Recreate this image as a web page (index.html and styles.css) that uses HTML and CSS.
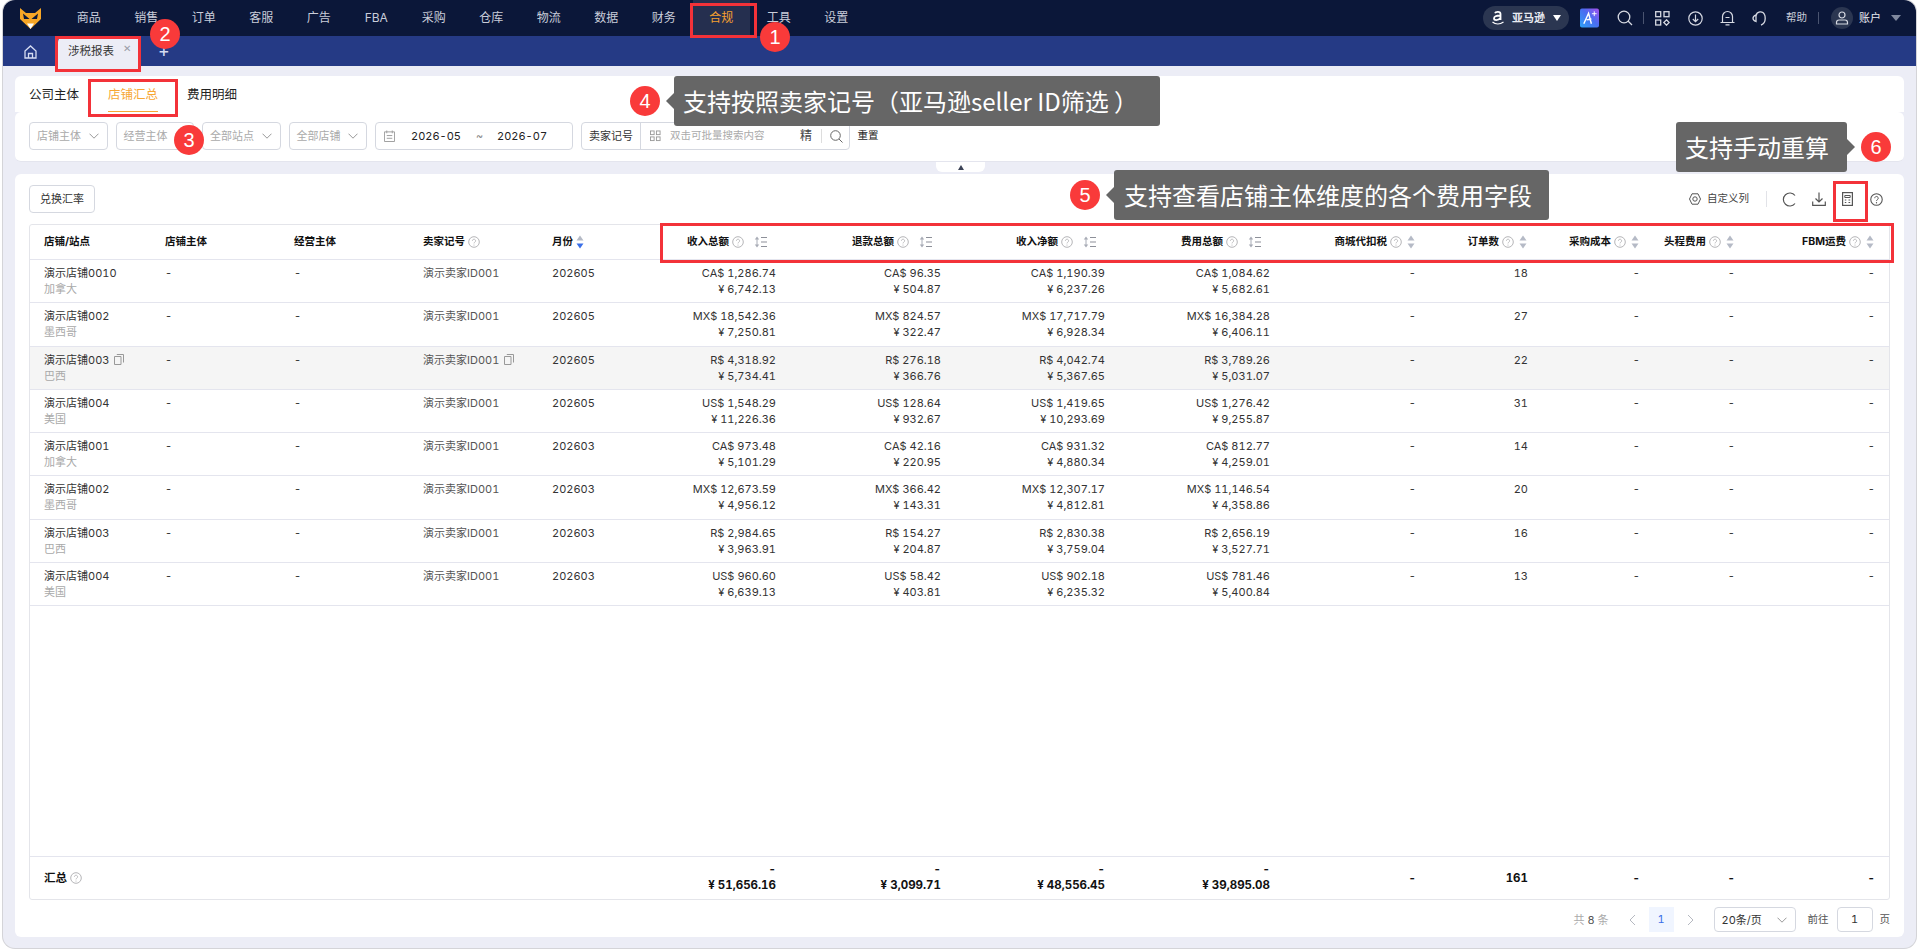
FILE: index.html
```html
<!DOCTYPE html>
<html lang="zh-CN">
<head>
<meta charset="utf-8">
<title>涉税报表</title>
<link rel="stylesheet" href="styles.css">
</head>
<body>
<svg class="defs" width="0" height="0" aria-hidden="true">
  <symbol id="i-help" viewBox="0 0 12 12"><circle cx="6" cy="6" r="5.3" fill="none" stroke="currentColor"/><path d="M4.4 4.8a1.6 1.6 0 1 1 2.5 1.3c-.6.4-.9.7-.9 1.3" fill="none" stroke="currentColor" stroke-width=".9"/><circle cx="6" cy="9" r=".6" fill="currentColor"/></symbol>
  <symbol id="i-chev" viewBox="0 0 10 6"><path d="M.5.7 5 5.2 9.5.7" fill="none" stroke="currentColor" stroke-width="1"/></symbol>
  <symbol id="i-sort" viewBox="0 0 13 12"><path d="M3 .5 5.2 3.4H.8ZM3 11.5.8 8.6h4.4Z" fill="#a8acb6"/><path d="M3 3v6" stroke="#a8acb6"/><path d="M7 1.5h6M7 6h6M7 10.5h6" stroke="#8d9099" stroke-width="1.2"/></symbol>
  <symbol id="i-caret" viewBox="0 0 8 14"><path d="M4 .5 7.5 5.5H.5Z" fill="#b5bac6"/><path d="M4 13.5.5 8.5h7Z" fill="#b5bac6"/></symbol>
  <symbol id="i-copy" viewBox="0 0 10 11"><path d="M.5 2.5h6.5v8H.5Z" fill="none" stroke="#999"/><path d="M2.8.5h6.7v8" fill="none" stroke="#999"/></symbol>
</svg>

<div class="window">
  <header class="nav">
    <svg class="logo" viewBox="0 0 21 21"><path d="M0 0 6 5h9l6-5v11l-10.500 10L0 11Z" fill="#f7a626"/><path d="M10.500 21 7 15.500h7Z" fill="#fff"/><path d="M3 5.500 9.500 11 4 11ZM18 5.500 11.500 11 17 11Z" fill="#0b1739"/></svg>
    <nav class="nav-menu">
      <a class="nav-item">商品</a><a class="nav-item">销售</a><a class="nav-item">订单</a><a class="nav-item">客服</a><a class="nav-item">广告</a><a class="nav-item">FBA</a><a class="nav-item">采购</a><a class="nav-item">仓库</a><a class="nav-item">物流</a><a class="nav-item">数据</a><a class="nav-item">财务</a><a class="nav-item active">合规</a><a class="nav-item">工具</a><a class="nav-item">设置</a>
    </nav>
    <div class="nav-right">
      <div class="pill">
        <svg class="amz" viewBox="0 0 12 16"><path d="M3 3.200C3.500 1.500 8.500 1 8.500 4v6M8.500 5.500C4 5.500 2 6.500 2 8.500s4 2.500 6.500-.5" fill="none" stroke="#fff" stroke-width="1.800"/><path d="M.5 12c3 2.500 7.500 2.500 11 0" fill="none" stroke="#fff" stroke-width="1.200"/></svg>
        <span class="pill-text">亚马逊</span><span class="tri tri-white"></span>
      </div>
      <svg class="ai" viewBox="0 0 20 20"><defs><linearGradient id="aig" x1="0" y1="1" x2="1" y2="0"><stop offset="0" stop-color="#2ea3f5"/><stop offset=".55" stop-color="#4b6cf0"/><stop offset="1" stop-color="#a650ee"/></linearGradient></defs><rect width="20" height="20" rx="2" fill="url(#aig)"/><path d="M4 16 9 5l3 11M7 12l5-1" fill="none" stroke="#fff" stroke-width="1.5"/><path d="M15 3v5M12.500 5.500h5" stroke="#fff"/></svg>
      <svg class="ni ni-search" viewBox="0 0 16 16"><circle cx="7" cy="7" r="5.800" fill="none" stroke="#d6d9e2" stroke-width="1.300"/><path d="m11 11 4 4" stroke="#d6d9e2" stroke-width="1.300"/></svg>
      <span class="nav-sep"></span>
      <svg class="ni ni-grid" viewBox="0 0 15 15"><g fill="none" stroke="#d6d9e2" stroke-width="1.300"><rect x=".7" y=".7" width="5" height="5"/><rect x="9" y=".7" width="5" height="5"/><rect x=".7" y="9" width="5" height="5"/><path d="m11.500 8.800 2.700 2.700-2.700 2.700-2.700-2.700Z"/></g></svg>
      <svg class="ni ni-dl" viewBox="0 0 15 15"><circle cx="7.500" cy="7.500" r="6.700" fill="none" stroke="#d6d9e2" stroke-width="1.200"/><path d="M7.500 3.500v7M4.800 8l2.700 2.700L10.200 8" fill="none" stroke="#d6d9e2" stroke-width="1.200"/></svg>
      <svg class="ni ni-bell" viewBox="0 0 15 16"><path d="M2.500 12V6.500a5 5 0 0 1 10 0V12M.5 12.500h14M5.500 14.800h4M5.500 7.500h4" fill="none" stroke="#d6d9e2" stroke-width="1.200"/></svg>
      <svg class="ni ni-head" viewBox="0 0 15 16"><path d="M4 5.500a4.500 4.500 0 0 1 8.500-1c.6 1.200.7 2.500.7 4 0 3-1.500 5.500-4.200 6.700" fill="none" stroke="#d6d9e2" stroke-width="1.300"/><path d="M4 5.200C2 5.800 1 7 1 8.300s1 2.500 3 3.200Z" fill="none" stroke="#d6d9e2" stroke-width="1.300"/></svg>
      <span class="nav-help">帮助</span>
      <span class="nav-sep sep-b"></span>
      <span class="avatar"><svg viewBox="0 0 14 14"><circle cx="7" cy="4" r="3" fill="none" stroke="#d6d9e2" stroke-width="1.200"/><path d="M1.500 13v-1.500c0-1.500 1-2.500 2.500-2.500h6c1.500 0 2.500 1 2.500 2.500V13Z" fill="none" stroke="#d6d9e2" stroke-width="1.200"/></svg></span>
      <span class="nav-user">账户</span>
      <span class="tri tri-gray"></span>
    </div>
  </header>

  <div class="tabbar">
    <svg class="home" viewBox="0 0 13 14"><path d="M1 6 6.500 1 12 6v7H1ZM4.500 13V8.500h4V13" fill="none" stroke="#d6dcf2" stroke-width="1.300"/></svg>
    <div class="page-tab"><span>涉税报表</span><span class="tab-x">✕</span></div>
    <span class="tab-add">+</span>
  </div>

  <main class="main">
    <section class="panel-top">
      <div class="sub-tabs">
        <a class="sub-tab">公司主体</a>
        <a class="sub-tab current">店铺汇总</a>
        <a class="sub-tab">费用明细</a>
      </div>
      <div class="filters">
        <div class="select"><span>店铺主体</span><svg class="chev"><use href="#i-chev"/></svg></div>
        <div class="select"><span>经营主体</span><svg class="chev"><use href="#i-chev"/></svg></div>
        <div class="select"><span>全部站点</span><svg class="chev"><use href="#i-chev"/></svg></div>
        <div class="select"><span>全部店铺</span><svg class="chev"><use href="#i-chev"/></svg></div>
        <div class="date">
          <svg class="cal" viewBox="0 0 12 13"><path d="M.5 2h11v10.500H.5ZM3 .5v3M9 .5v3M3 6h6M3 9h6" fill="none" stroke="#999"/></svg>
          <span class="d1">2026-05</span><span class="tilde">~</span><span>2026-07</span>
        </div>
        <div class="search">
          <span class="search-label">卖家记号</span>
          <svg class="grid-s" viewBox="0 0 12 12"><g fill="none" stroke="#999"><rect x=".5" y=".5" width="4" height="4"/><rect x="7" y=".5" width="4" height="4"/><rect x=".5" y="7" width="4" height="4"/><rect x="7" y="7" width="4" height="4"/></g></svg>
          <span class="search-ph">双击可批量搜索内容</span>
          <span class="search-jing">精</span>
          <span class="search-sep"></span>
          <svg class="search-i" viewBox="0 0 13 13"><circle cx="5.500" cy="5.500" r="4.800" fill="none" stroke="#666"/><path d="m9 9 3.500 3.500" stroke="#666"/></svg>
        </div>
        <span class="reset">重置</span>
      </div>
      <div class="collapse"><span class="collapse-tri"></span></div>
    </section>

    <section class="card">
      <div class="toolbar">
        <button class="btn">兑换汇率</button>
        <div class="tools">
          <svg class="t-gear" viewBox="0 0 12 12"><path d="M3 .8h6L11.500 6 9 11.200H3L.5 6Z" fill="none" stroke="#555"/><circle cx="6" cy="6" r="2.200" fill="none" stroke="#555"/></svg>
          <span class="t-text">自定义列</span>
          <span class="t-sep"></span>
          <svg class="t-ref" viewBox="0 0 15 15"><path d="M13 3.500A6.500 6.500 0 1 0 13 11.500" fill="none" stroke="#555" stroke-width="1.200"/></svg>
          <svg class="t-dl" viewBox="0 0 14 14"><path d="M7 .5v9M3.500 6.500 7 10l3.500-3.500M.7 9.500v3.800h12.600V9.500" fill="none" stroke="#555" stroke-width="1.200"/></svg>
          <svg class="t-calc" viewBox="0 0 11 14"><rect x=".6" y=".6" width="9.800" height="12.800" fill="none" stroke="#555" stroke-width="1.200"/><path d="M2.800 3.500h5.400v2H2.800ZM2.800 8h1.500M6.500 8h1.700M2.800 10.500h1.500M6.500 10.500h1.700" fill="none" stroke="#555"/></svg>
          <svg class="t-help"><use href="#i-help"/></svg>
        </div>
      </div>

      <div class="table">
        <div class="row head">
          <div class="c">店铺/站点</div><div class="c">店铺主体</div><div class="c">经营主体</div>
          <div class="c">卖家记号<svg class="h"><use href="#i-help"/></svg></div>
          <div class="c">月份<svg class="caret" viewBox="0 0 8 14"><path d="M4 .5 7.500 5.500H.5Z" fill="#b5bac6"/><path d="M4 13.500.5 8.500h7Z" fill="#3a6fe8"/></svg></div>
          <div class="c r wide">收入总额<svg class="h"><use href="#i-help"/></svg><svg class="sort"><use href="#i-sort"/></svg></div>
          <div class="c r wide">退款总额<svg class="h"><use href="#i-help"/></svg><svg class="sort"><use href="#i-sort"/></svg></div>
          <div class="c r wide">收入净额<svg class="h"><use href="#i-help"/></svg><svg class="sort"><use href="#i-sort"/></svg></div>
          <div class="c r wide">费用总额<svg class="h"><use href="#i-help"/></svg><svg class="sort"><use href="#i-sort"/></svg></div>
          <div class="c r">商城代扣税<svg class="h"><use href="#i-help"/></svg><svg class="caret"><use href="#i-caret"/></svg></div>
          <div class="c r">订单数<svg class="h"><use href="#i-help"/></svg><svg class="caret"><use href="#i-caret"/></svg></div>
          <div class="c r">采购成本<svg class="h"><use href="#i-help"/></svg><svg class="caret"><use href="#i-caret"/></svg></div>
          <div class="c r">头程费用<svg class="h"><use href="#i-help"/></svg><svg class="caret"><use href="#i-caret"/></svg></div>
          <div class="c r">FBM运费<svg class="h"><use href="#i-help"/></svg><svg class="caret"><use href="#i-caret"/></svg></div>
        </div>

        <div class="row">
          <div class="c"><div>演示店铺0010</div><div class="sub">加拿大</div></div><div class="c">-</div><div class="c">-</div><div class="c seller">演示卖家ID001</div><div class="c">202605</div>
          <div class="c r">CA$ 1,286.74<br>¥ 6,742.13</div><div class="c r">CA$ 96.35<br>¥ 504.87</div><div class="c r">CA$ 1,190.39<br>¥ 6,237.26</div><div class="c r">CA$ 1,084.62<br>¥ 5,682.61</div>
          <div class="c r">-</div><div class="c r">18</div><div class="c r">-</div><div class="c r">-</div><div class="c r">-</div>
        </div>
        <div class="row">
          <div class="c"><div>演示店铺002</div><div class="sub">墨西哥</div></div><div class="c">-</div><div class="c">-</div><div class="c seller">演示卖家ID001</div><div class="c">202605</div>
          <div class="c r">MX$ 18,542.36<br>¥ 7,250.81</div><div class="c r">MX$ 824.57<br>¥ 322.47</div><div class="c r">MX$ 17,717.79<br>¥ 6,928.34</div><div class="c r">MX$ 16,384.28<br>¥ 6,406.11</div>
          <div class="c r">-</div><div class="c r">27</div><div class="c r">-</div><div class="c r">-</div><div class="c r">-</div>
        </div>
        <div class="row hover">
          <div class="c"><div>演示店铺003<svg class="copy"><use href="#i-copy"/></svg></div><div class="sub">巴西</div></div><div class="c">-</div><div class="c">-</div><div class="c seller">演示卖家ID001<svg class="copy"><use href="#i-copy"/></svg></div><div class="c">202605</div>
          <div class="c r">R$ 4,318.92<br>¥ 5,734.41</div><div class="c r">R$ 276.18<br>¥ 366.76</div><div class="c r">R$ 4,042.74<br>¥ 5,367.65</div><div class="c r">R$ 3,789.26<br>¥ 5,031.07</div>
          <div class="c r">-</div><div class="c r">22</div><div class="c r">-</div><div class="c r">-</div><div class="c r">-</div>
        </div>
        <div class="row">
          <div class="c"><div>演示店铺004</div><div class="sub">美国</div></div><div class="c">-</div><div class="c">-</div><div class="c seller">演示卖家ID001</div><div class="c">202605</div>
          <div class="c r">US$ 1,548.29<br>¥ 11,226.36</div><div class="c r">US$ 128.64<br>¥ 932.67</div><div class="c r">US$ 1,419.65<br>¥ 10,293.69</div><div class="c r">US$ 1,276.42<br>¥ 9,255.87</div>
          <div class="c r">-</div><div class="c r">31</div><div class="c r">-</div><div class="c r">-</div><div class="c r">-</div>
        </div>
        <div class="row">
          <div class="c"><div>演示店铺001</div><div class="sub">加拿大</div></div><div class="c">-</div><div class="c">-</div><div class="c seller">演示卖家ID001</div><div class="c">202603</div>
          <div class="c r">CA$ 973.48<br>¥ 5,101.29</div><div class="c r">CA$ 42.16<br>¥ 220.95</div><div class="c r">CA$ 931.32<br>¥ 4,880.34</div><div class="c r">CA$ 812.77<br>¥ 4,259.01</div>
          <div class="c r">-</div><div class="c r">14</div><div class="c r">-</div><div class="c r">-</div><div class="c r">-</div>
        </div>
        <div class="row">
          <div class="c"><div>演示店铺002</div><div class="sub">墨西哥</div></div><div class="c">-</div><div class="c">-</div><div class="c seller">演示卖家ID001</div><div class="c">202603</div>
          <div class="c r">MX$ 12,673.59<br>¥ 4,956.12</div><div class="c r">MX$ 366.42<br>¥ 143.31</div><div class="c r">MX$ 12,307.17<br>¥ 4,812.81</div><div class="c r">MX$ 11,146.54<br>¥ 4,358.86</div>
          <div class="c r">-</div><div class="c r">20</div><div class="c r">-</div><div class="c r">-</div><div class="c r">-</div>
        </div>
        <div class="row">
          <div class="c"><div>演示店铺003</div><div class="sub">巴西</div></div><div class="c">-</div><div class="c">-</div><div class="c seller">演示卖家ID001</div><div class="c">202603</div>
          <div class="c r">R$ 2,984.65<br>¥ 3,963.91</div><div class="c r">R$ 154.27<br>¥ 204.87</div><div class="c r">R$ 2,830.38<br>¥ 3,759.04</div><div class="c r">R$ 2,656.19<br>¥ 3,527.71</div>
          <div class="c r">-</div><div class="c r">16</div><div class="c r">-</div><div class="c r">-</div><div class="c r">-</div>
        </div>
        <div class="row">
          <div class="c"><div>演示店铺004</div><div class="sub">美国</div></div><div class="c">-</div><div class="c">-</div><div class="c seller">演示卖家ID001</div><div class="c">202603</div>
          <div class="c r">US$ 960.60<br>¥ 6,639.13</div><div class="c r">US$ 58.42<br>¥ 403.81</div><div class="c r">US$ 902.18<br>¥ 6,235.32</div><div class="c r">US$ 781.46<br>¥ 5,400.84</div>
          <div class="c r">-</div><div class="c r">13</div><div class="c r">-</div><div class="c r">-</div><div class="c r">-</div>
        </div>

        <div class="spacer"></div>

        <div class="row total">
          <div class="c mid">汇总<svg class="h"><use href="#i-help"/></svg></div><div class="c"></div><div class="c"></div><div class="c"></div><div class="c"></div>
          <div class="c r">-<br>¥ 51,656.16</div><div class="c r">-<br>¥ 3,099.71</div><div class="c r">-<br>¥ 48,556.45</div><div class="c r">-<br>¥ 39,895.08</div>
          <div class="c r mid">-</div><div class="c r mid">161</div><div class="c r mid">-</div><div class="c r mid">-</div><div class="c r mid">-</div>
        </div>
      </div>

      <div class="pager">
        <span class="pg-total">共 <b>8</b> 条</span>
        <svg class="pg-arrow"  viewBox="0 0 7 12"><path d="M6 1 1 6l5 5" fill="none" stroke="#b5b8c0"/></svg>
        <span class="pg-num">1</span>
        <svg class="pg-arrow" viewBox="0 0 7 12"><path d="m1 1 5 5-5 5" fill="none" stroke="#b5b8c0"/></svg>
        <div class="pg-size"><span>20条/页</span><svg class="chev"><use href="#i-chev"/></svg></div>
        <span class="pg-go">前往</span>
        <span class="pg-input">1</span>
        <span class="pg-go">页</span>
      </div>
    </section>
  </main>
</div>

<div class="marks">
  <span class="box b1"></span><span class="box b2"></span><span class="box b3"></span><span class="box b5"></span><span class="box b6"></span>
  <span class="num n1">1</span><span class="num n2">2</span><span class="num n3">3</span><span class="num n4">4</span><span class="num n5">5</span><span class="num n6">6</span>
  <div class="tip t4">支持按照卖家记号（亚马逊seller ID筛选 ）</div>
  <div class="tip t5">支持查看店铺主体维度的各个费用字段</div>
  <div class="tip t6">支持手动重算</div>
</div>
</body>
</html>
```
FILE: styles.css
```css
* { box-sizing: border-box; }
html, body { margin: 0; height: 100%; }
body {
  background: #fff;
  padding: 0 4px 4px 3px;
  font: 11px/16px Inter, "Noto Sans CJK SC", sans-serif;
  font-variant-numeric: tabular-nums;
  color: #333;
  overflow: hidden;
  position: relative;
}
.defs { position: absolute; }
.window {
  height: 948px;
  display: flex;
  flex-direction: column;
  background: #ecedf6;
  border-radius: 12px;
  overflow: hidden;
  box-shadow: 0 0 0 1px #d4d4d8;
}

/* top nav */
.nav {
  height: 36px;
  flex: none;
  display: flex;
  align-items: center;
  background: #0b1739;
  color: #c9cdd9;
}
.logo { width: 21px; height: 21px; margin-left: 17px; flex: none; }
.nav-menu { display: flex; height: 36px; margin-left: 19px; }
.nav-item {
  width: 57.500px;
  display: flex;
  align-items: center;
  justify-content: center;
  font-size: 12px;
}
.nav-item.active { background: #252f4f; color: #f5a030; }
.nav-right { margin-left: auto; display: flex; align-items: center; height: 36px; padding-right: 15px; }
.pill {
  width: 86px;
  height: 24px;
  border-radius: 12px;
  background: #2b3651;
  display: flex;
  align-items: center;
  padding-left: 9px;
}
.amz { width: 12px; height: 16px; flex: none; }
.pill-text { margin-left: 8px; color: #e8eaf0; font-size: 11px; font-weight: 700; width: 33px; }
.tri { width: 0; height: 0; border-left: 4px solid transparent; border-right: 4px solid transparent; border-top: 6px solid #fff; }
.tri-white { margin-left: 8px; }
.tri-gray { margin-left: 10px; border-left-width: 5px; border-right-width: 5px; border-top-color: #7f889e; }
.ai { width: 19px; height: 20px; margin-left: 11px; flex: none; }
.ni { flex: none; }
.ni-search { width: 16px; height: 16px; margin-left: 18px; }
.nav-sep { width: 1px; height: 12px; background: #4a5470; margin-left: 10px; }
.ni-grid { width: 15px; height: 15px; margin-left: 11px; }
.ni-dl { width: 15px; height: 15px; margin-left: 18px; }
.ni-bell { width: 15px; height: 16px; margin-left: 17px; }
.ni-head { width: 15px; height: 16px; margin-left: 17px; }
.nav-help { margin-left: 19px; font-size: 10.500px; }
.sep-b { margin-left: 11px; }
.avatar { width: 22px; height: 22px; border-radius: 50%; background: #2b3651; margin-left: 12px; display: flex; align-items: center; justify-content: center; }
.avatar svg { width: 14px; height: 14px; }
.nav-user { margin-left: 6px; font-size: 11px; color: #e8eaf0; }

/* page tabs */
.tabbar { height: 30px; flex: none; display: flex; background: #253a85; position: relative; }
.home { width: 13px; height: 14px; margin: 9px 0 0 21px; flex: none; }
.page-tab {
  width: 82px;
  margin-left: 21px;
  background: #ecedf6;
  border-radius: 6px 6px 0 0;
  display: flex;
  align-items: center;
  padding-left: 10px;
  font-size: 11.500px;
  color: #333;
}
.tab-x { margin-left: 9px; color: #9a9da8; font-size: 10px; line-height: 12px; margin-top: -6px; }
.tab-add { color: #d6dcf2; font-size: 18px; line-height: 30px; margin-left: 18px; }

/* main area */
.main { flex: 1; display: flex; flex-direction: column; gap: 12px; padding: 10px 12px 11px; min-height: 0; }
.panel-top { height: 86px; flex: none; position: relative; }
.sub-tabs {
  height: 36px;
  background: #fff;
  border-radius: 6px 6px 0 0;
  display: flex;
  padding-left: 14px;
  gap: 29px;
}
.sub-tab { font-size: 12.500px; line-height: 38px; color: #222; height: 36px; white-space: nowrap; }
.sub-tab.current { color: #f7a734; border-bottom: 1px solid #f7a734; }
.filters {
  height: 50px;
  background: #fff;
  border-radius: 6px;
  display: flex;
  align-items: flex-start;
  padding: 10px 14px 0;
  gap: 8px;
  border-bottom: 1px solid #e4e5ee;
}
.select, .date, .search, .pg-size {
  height: 28px;
  border: 1px solid #d5d8e0;
  border-radius: 4px;
  display: flex;
  align-items: center;
  background: #fff;
}
.select { width: 78.500px; padding: 0 8px 0 7px; justify-content: space-between; color: #aaa; white-space: nowrap; }
.chev { width: 10px; height: 6px; color: #999; flex: none; }
.date { width: 198px; padding-left: 8px; color: #222; }
.cal { width: 11px; height: 12px; flex: none; }
.d1 { margin-left: 16px; }
.tilde { margin: 0 14px 0 15px; color: #888; }
.search { width: 268.500px; }
.search-label { width: 59px; height: 26px; flex: none; border-right: 1px solid #d5d8e0; text-align: center; line-height: 27px; color: #333; }
.grid-s { width: 11px; height: 12px; margin-left: 9px; flex: none; }
.search-ph { font-size: 10.500px; color: #aaa; margin-left: 9px; width: 100px; white-space: nowrap; }
.search-jing { font-size: 12px; color: #444; margin-left: 30px; }
.search-sep { width: 1px; height: 14px; background: #ddd; margin-left: 9px; }
.search-i { width: 13px; height: 13px; margin-left: 8px; flex: none; }
.reset { font-size: 10.500px; color: #222; line-height: 28px; margin-left: 0; }
.collapse {
  position: absolute;
  left: 921px;
  top: 86px;
  width: 49px;
  height: 10px;
  background: #fff;
  border-radius: 0 0 6px 6px;
  display: flex;
  align-items: center;
  justify-content: center;
}
.collapse-tri { width: 0; height: 0; border-left: 3.500px solid transparent; border-right: 3.500px solid transparent; border-bottom: 5px solid #3c4356; }

/* card */
.card {
  flex: 1;
  min-height: 0;
  background: #fff;
  border-radius: 6px;
  padding: 11px 14px 5px;
  display: flex;
  flex-direction: column;
}
.toolbar { height: 28px; flex: none; margin-bottom: 11px; display: flex; align-items: center; justify-content: space-between; }
.btn {
  width: 66px;
  height: 28px;
  border: 1px solid #d5d8e0;
  border-radius: 4px;
  background: #fff;
  font: inherit;
  color: #333;
  padding: 0;
}
.tools { display: flex; align-items: center; padding-right: 7px; margin-top: 0; }
.t-gear { width: 12px; height: 12px; }
.t-text { margin-left: 6px; width: 44px; white-space: nowrap; font-size: 10.500px; color: #444; }
.t-sep { width: 1px; height: 16px; background: #e2e3e8; margin-left: 15px; }
.t-ref { width: 15px; height: 15px; margin-left: 15px; }
.t-dl { width: 14px; height: 14px; margin-left: 15px; }
.t-calc { width: 11px; height: 14px; margin-left: 16px; }
.t-help { width: 13px; height: 13px; margin-left: 17px; color: #555; }

/* table */
.table {
  height: 676px;
  flex: none;
  display: flex;
  flex-direction: column;
  border: 1px solid #e4e5ea;
  border-radius: 3px;
}
.row {
  display: grid;
  grid-template-columns: 121px 129px 129px 129px 87px 165px 165px 164px 165px 146px 112px 112px 95px 140px;
  height: 43.250px;
  flex: none;
  border-bottom: 1px solid #e4e5ee;
  color: #333;
}
.c { padding: 5px 14px 0 14px; white-space: nowrap; min-width: 0; }
.r { text-align: right; }
.sub { color: #a9a9a9; }
.seller { color: #555; }
.hover { background: #f5f5f5; }
.copy { width: 10px; height: 11px; margin-left: 5px; vertical-align: -1px; }
.head { height: 35px; font-size: 10.500px; font-weight: 700; color: #111; }
.head .c { padding-top: 0; padding-right: 15px; display: flex; align-items: center; }
.head .r { justify-content: flex-end; }
.head .wide { padding-right: 23px; }
.h { width: 12px; height: 12px; margin-left: 3px; color: #b5b5b8; flex: none; }
.sort { width: 13px; height: 12px; margin-left: 10px; flex: none; }
.caret { width: 8px; height: 14px; margin-left: 3px; flex: none; }
.r .caret { margin-left: 5px; }
.spacer { flex: 1; border-bottom: 1px solid #e4e5ee; }
.total { border-bottom: 0; font-weight: 700; color: #111; height: 42px; font-size: 11.500px; }
.total .c { padding-top: 4px; }
.total .mid { padding-top: 0; display: flex; align-items: center; }
.total .r.mid { justify-content: flex-end; }

/* pagination */
.pager { height: 25px; margin-top: 7px; flex: none; display: flex; align-items: center; justify-content: flex-end; color: #555; }
.pg-total { color: #aaa; margin-right: 20px; white-space: nowrap; }
.pg-total b { color: #555; font-weight: 400; }
.pg-arrow { width: 7px; height: 12px; flex: none; }
.pg-num { width: 25px; height: 25px; background: #f0f5ff; color: #3a6fe8; text-align: center; line-height: 25px; margin: 0 13px; }
.pg-size { width: 82px; height: 25px; margin-left: 20px; padding: 0 8px 0 7px; justify-content: space-between; color: #333; }
.pg-go { margin-left: 12px; white-space: nowrap; font-size: 10.500px; }
.pg-input { width: 36px; height: 25px; border: 1px solid #d5d8e0; border-radius: 4px; margin-left: 8px; text-align: center; line-height: 23px; color: #333; }
.pg-input + .pg-go { margin-left: 7px; }

/* annotations laid over the screenshot */
.marks { position: absolute; left: 0; top: 0; width: 1920px; height: 952px; pointer-events: none; }
.box { position: absolute; border: 3px solid #f33239; }
.b1 { left: 690px; top: 3px; width: 67px; height: 35px; }
.b2 { left: 55px; top: 36px; width: 86px; height: 36px; }
.b3 { left: 88px; top: 79px; width: 90px; height: 38px; }
.b5 { left: 660px; top: 223px; width: 1234px; height: 40px; }
.b6 { left: 1833px; top: 181px; width: 35px; height: 41px; }
.num {
  position: absolute;
  width: 30px;
  height: 30px;
  border-radius: 50%;
  background: #f93a3a;
  color: #fff;
  font: 20px/30px "Liberation Sans", sans-serif;
  text-align: center;
}
.n1 { left: 760px; top: 22px; }
.n2 { left: 150px; top: 19px; }
.n3 { left: 174px; top: 125px; }
.n4 { left: 630px; top: 86px; }
.n5 { left: 1070px; top: 180px; }
.n6 { left: 1861px; top: 132px; }
.tip {
  position: absolute;
  height: 50px;
  background: #666;
  border-radius: 3px;
  color: #fff;
  font: 24px/50px "Noto Sans CJK SC", sans-serif;
  white-space: nowrap;
}
.tip::after {
  content: "";
  position: absolute;
  top: 17px;
  border-top: 8px solid transparent;
  border-bottom: 8px solid transparent;
}
.t4 { left: 674px; top: 76px; width: 486px; padding-left: 9px; }
.t4::after, .t5::after { right: 100%; border-right: 8px solid #666; }
.t5 { left: 1114px; top: 170px; width: 435px; padding-left: 10px; }
.t6 { left: 1676px; top: 122px; width: 171px; padding-left: 9px; }
.t6::after { left: 100%; border-left: 8px solid #666; }
```
